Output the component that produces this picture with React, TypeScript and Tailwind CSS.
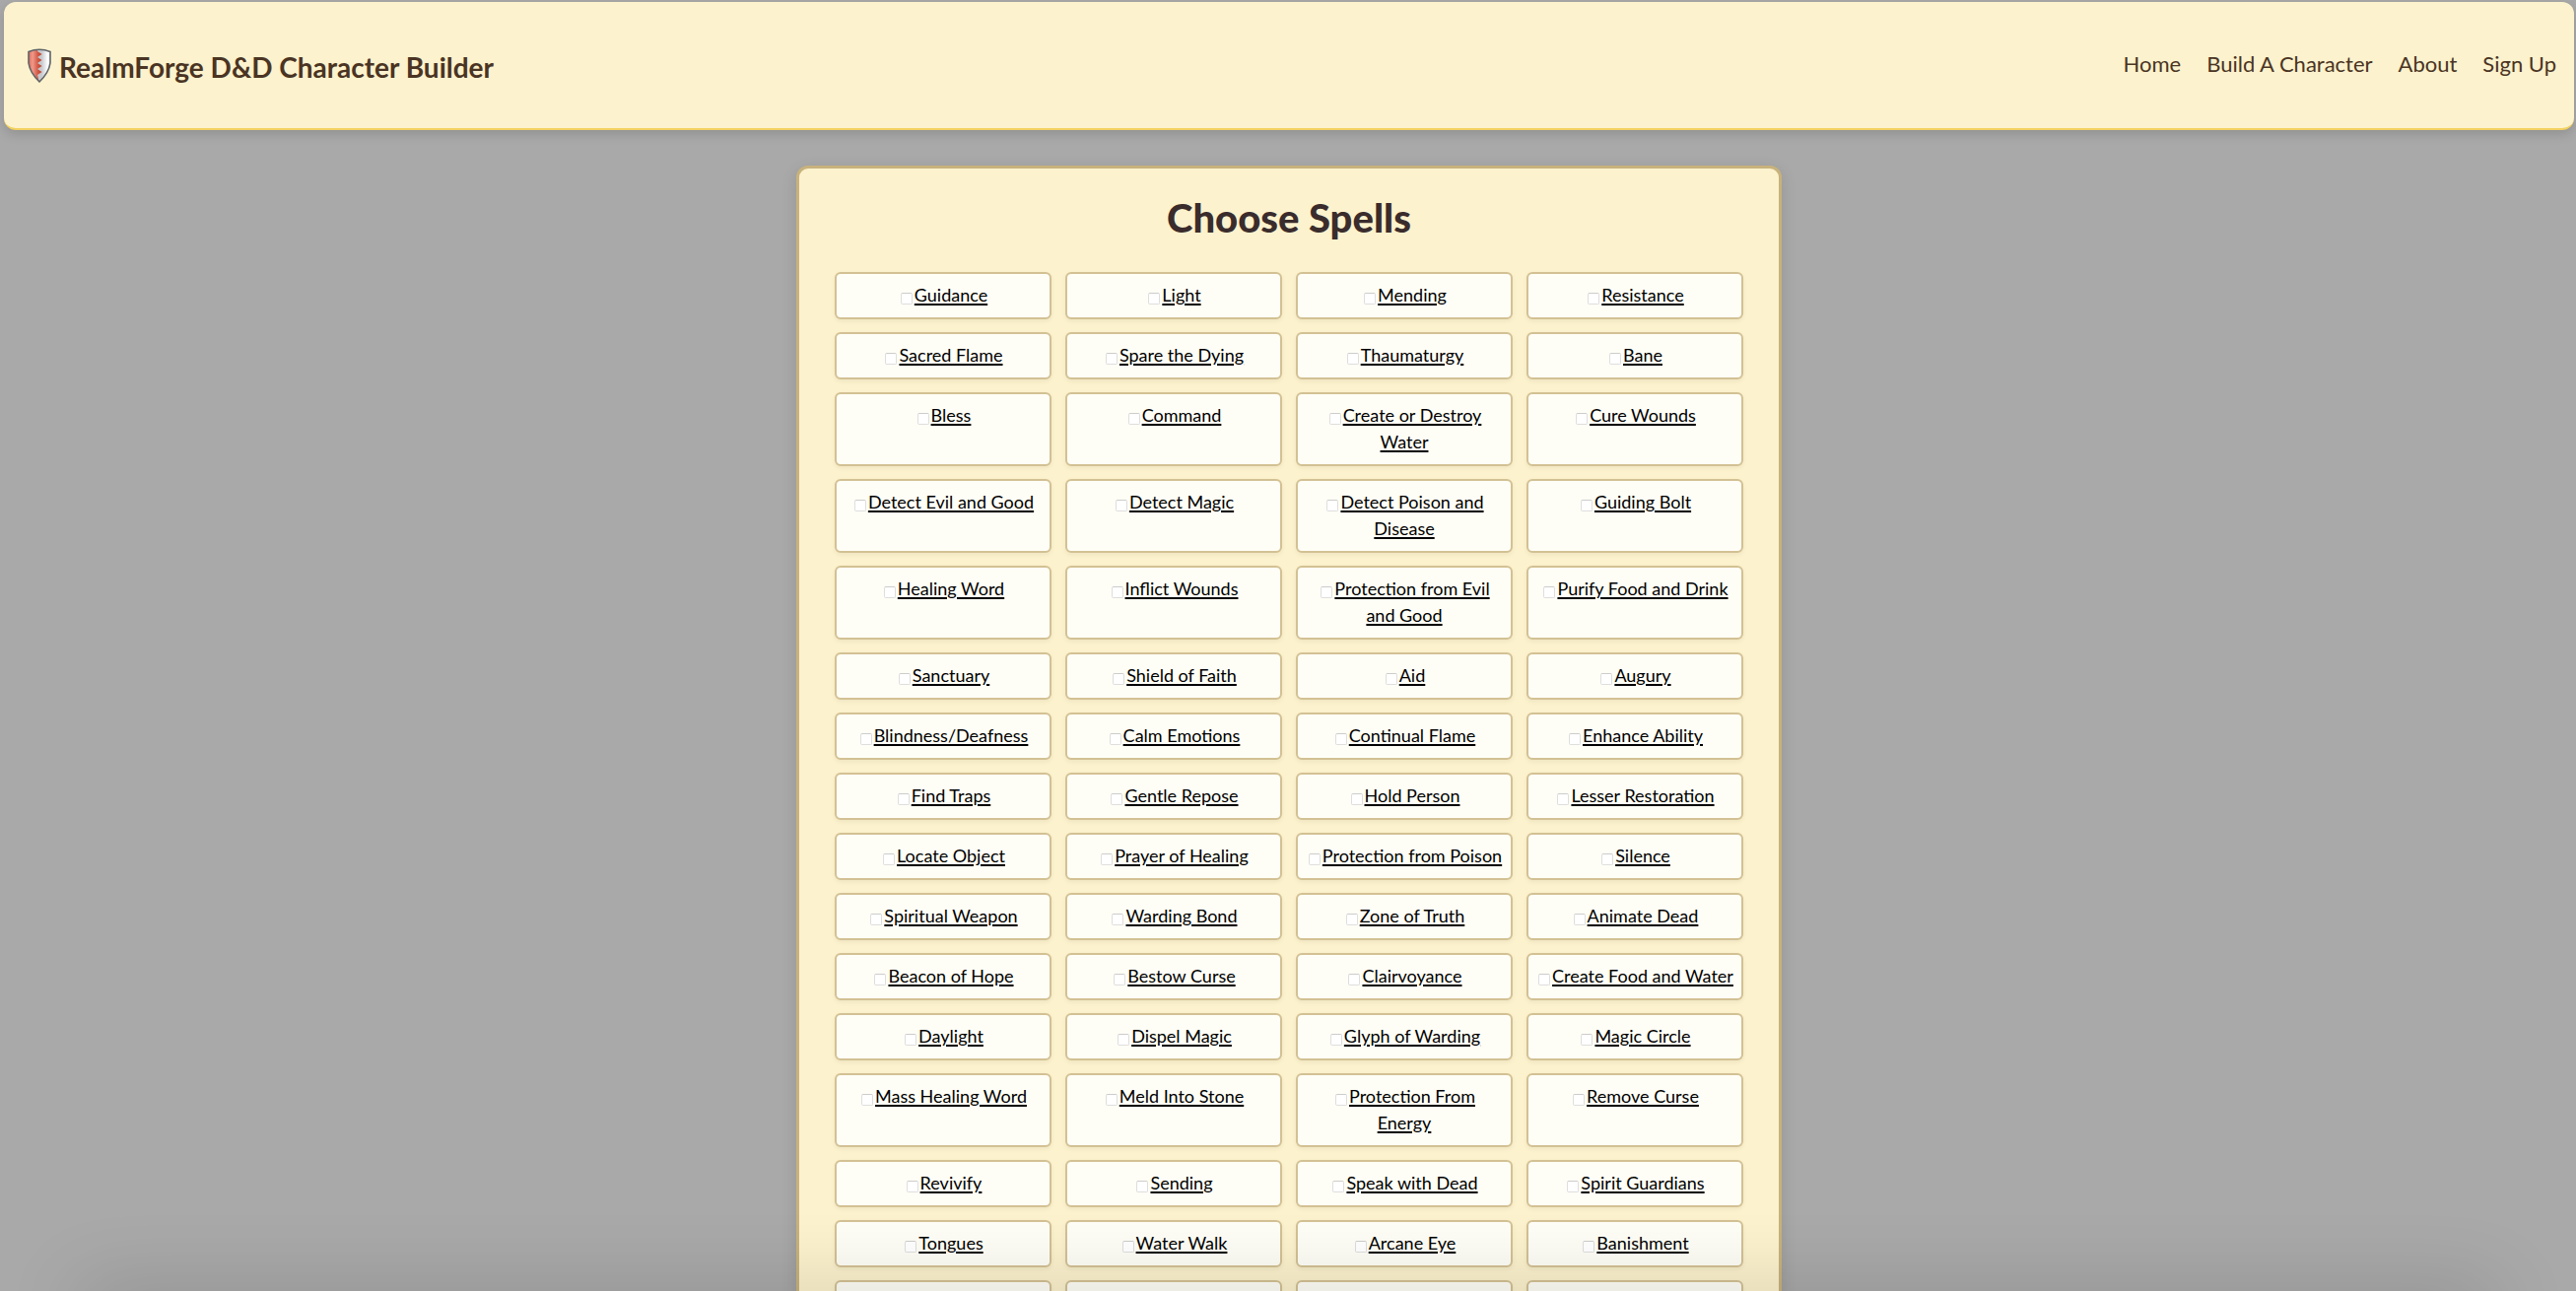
const SPELLS = [
  'Guidance', 'Light', 'Mending', 'Resistance',
  'Sacred Flame', 'Spare the Dying', 'Thaumaturgy', 'Bane',
  'Bless', 'Command', 'Create or Destroy Water', 'Cure Wounds',
  'Detect Evil and Good', 'Detect Magic', 'Detect Poison and Disease', 'Guiding Bolt',
  'Healing Word', 'Inflict Wounds', 'Protection from Evil and Good', 'Purify Food and Drink',
  'Sanctuary', 'Shield of Faith', 'Aid', 'Augury',
  'Blindness/Deafness', 'Calm Emotions', 'Continual Flame', 'Enhance Ability',
  'Find Traps', 'Gentle Repose', 'Hold Person', 'Lesser Restoration',
  'Locate Object', 'Prayer of Healing', 'Protection from Poison', 'Silence',
  'Spiritual Weapon', 'Warding Bond', 'Zone of Truth', 'Animate Dead',
  'Beacon of Hope', 'Bestow Curse', 'Clairvoyance', 'Create Food and Water',
  'Daylight', 'Dispel Magic', 'Glyph of Warding', 'Magic Circle',
  'Mass Healing Word', 'Meld Into Stone', 'Protection From Energy', 'Remove Curse',
  'Revivify', 'Sending', 'Speak with Dead', 'Spirit Guardians',
  'Tongues', 'Water Walk', 'Arcane Eye', 'Banishment',
  'Confusion', 'Control Water', 'Death Ward', 'Divination',
];

const NAV = ['Home', 'Build A Character', 'About', 'Sign Up'];

function Shield() {
  return (
    <svg viewBox="0 0 24 35" className="h-[35px] w-6 shrink-0" aria-hidden="true">
      <defs>
        <linearGradient id="red" x1="0" x2="1">
          <stop offset="0" stopColor="#d9604d" />
          <stop offset="0.35" stopColor="#f0998a" />
          <stop offset="0.75" stopColor="#cf5440" />
          <stop offset="1" stopColor="#b8412e" />
        </linearGradient>
        <linearGradient id="silver" x1="0" x2="1">
          <stop offset="0" stopColor="#b4b8bc" />
          <stop offset="0.6" stopColor="#c8cbcf" />
          <stop offset="0.85" stopColor="#ffffff" />
          <stop offset="1" stopColor="#e4e6e8" />
        </linearGradient>
        <clipPath id="body">
          <path d="M1 3.500Q12 -1 23 3.500V15Q21.500 25 12 34Q2.500 25 1 15Z" />
        </clipPath>
      </defs>
      <g clipPath="url(#body)">
        <rect width="24" height="35" fill="url(#silver)" />
        <path d="M0 0H10V3L14.500 6L10 9L14.500 12L10 15L14.500 18L10 21L14.500 24L10 27L12 35H0Z" fill="url(#red)" />
      </g>
      <path d="M1 3.500Q12 -1 23 3.500V15Q21.500 25 12 34Q2.500 25 1 15Z" fill="none" stroke="#5f6468" strokeWidth="1.600" />
    </svg>
  );
}

export default function App() {
  return (
    <div className="h-screen overflow-hidden bg-[#a9a9a9] pt-0.5 pr-0.5 pl-1 font-['Lato',sans-serif]">
      <header className="flex h-[130px] items-center justify-between rounded-xl border-b-2 border-[#f2d15f] bg-[#fcf2cd] pr-[18px] pl-6 text-[#4a3423] shadow-[0_4px_12px_rgba(0,0,0,0.15)]">
        <a href="#" className="flex items-center gap-2 text-[28px] font-bold">
          <Shield />
          <span className="mt-1">RealmForge D&amp;D Character Builder</span>
        </a>
        <nav className="flex gap-[26px] pb-1 text-[22px]">
          {NAV.map((item) => (
            <a key={item} href="#">{item}</a>
          ))}
        </nav>
      </header>

      <main className="mx-auto mt-9 w-full max-w-[1000px] rounded-xl border-[3px] border-[#c8b27c] bg-[#fcf2cd] px-9 pt-5 pb-9 shadow-[0_4px_16px_rgba(0,0,0,0.12)]">
        <h1 className="mb-[25px] text-center text-[40px] leading-[60px] font-black text-[#3a2c2c]">Choose Spells</h1>
        <form className="grid grid-cols-4 gap-x-3.5 gap-y-[13px]">
          {SPELLS.map((spell) => (
            <div key={spell} className="rounded-md border-2 border-[#d3c194] bg-[#fffef6] px-[7px] pt-2 pb-[9px] text-center text-[18px] leading-[27px] text-black shadow-[0_2px_5px_rgba(0,0,0,0.06)]">
              <label>
                <input
                  type="checkbox"
                  className="mr-0.5 ml-0.5 inline-block size-3 appearance-none rounded-xs border border-[#dedede] border-t-[#cccccc] bg-white align-[-3px]"
                />
                <span className="underline decoration-2 underline-offset-2">{spell}</span>
              </label>
            </div>
          ))}
        </form>
      </main>

      <div className="pointer-events-none fixed inset-x-20 -bottom-10 h-10 shadow-[0_0_80px_rgba(0,0,0,0.2)]" />
    </div>
  );
}
